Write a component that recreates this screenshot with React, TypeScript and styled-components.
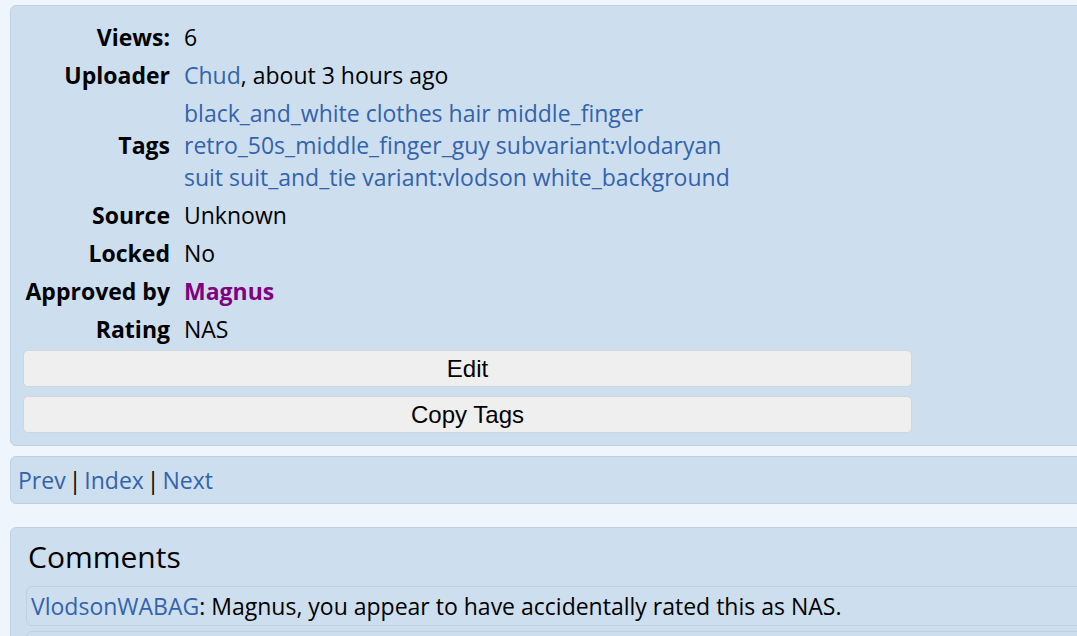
import React from "react";
import styled, { createGlobalStyle } from "styled-components";

const Global = createGlobalStyle`
  html, body {
    margin: 0;
    padding: 0;
    background: #eef5fd;
    overflow: hidden;
  }
  body {
    font-family: "Open Sans", "Noto Sans", sans-serif;
    font-size: 23px;
    color: #000;
  }
`;

const Page = styled.div`
  display: flex;
  flex-direction: column;
  padding: 5px 0 0 10px;
  width: 1100px;
`;

const Panel = styled.section<{ $pad: string; $mt?: number }>`
  background: #cddeee;
  border: 1px solid #bfd0e1;
  border-radius: 6px;
  padding: ${(p) => p.$pad};
  margin-top: ${(p) => p.$mt ?? 0}px;
`;

const InfoGrid = styled.div`
  display: grid;
  grid-template-columns: 147px 1fr;
  column-gap: 14px;
  width: 889px;
`;

const Label = styled.div<{ $center?: boolean }>`
  text-align: right;
  font-weight: 700;
  line-height: 32px;
  padding: 3px 0;
  white-space: nowrap;
  align-self: ${(p) => (p.$center ? "center" : "start")};
`;

const Value = styled.div`
  line-height: 32px;
  padding: 3px 0;
  white-space: nowrap;
  display: flex;
  flex-direction: column;
  justify-content: center;
`;

const Line = styled.div``;

const Link = styled.a<{ $approver?: boolean }>`
  color: ${(p) => (p.$approver ? "#800080" : "#3363ad")};
  font-weight: ${(p) => (p.$approver ? 700 : 400)};
  text-decoration: none;
`;

const Buttons = styled.div`
  grid-column: 1 / 3;
  display: flex;
  flex-direction: column;
  gap: 9px;
  padding-top: 2px;
`;

const Button = styled.button`
  box-sizing: border-box;
  height: 37px;
  width: 100%;
  background: #efefef;
  border: 1px solid #cfd6dd;
  border-radius: 5px;
  font-family: "Liberation Sans", Arial, sans-serif;
  font-size: 24px;
  color: #000;
  padding: 0;
`;

const Nav = styled.div`
  line-height: 32px;
`;

const Sep = styled.span`
  margin: 0 3px;
  color: #000;
`;

const Heading = styled.h2`
  margin: 0 0 9px 0;
  padding-left: 2px;
  font-weight: 400;
  font-size: 30px;
  line-height: 41px;
`;

const Comment = styled.div`
  border: 1px solid #bfd0e1;
  border-radius: 6px;
  padding: 3px 4px;
  line-height: 32px;
  margin-bottom: 5px;
`;

const tagLines = [
  ["black_and_white", "clothes", "hair", "middle_finger"],
  ["retro_50s_middle_finger_guy", "subvariant:vlodaryan"],
  ["suit", "suit_and_tie", "variant:vlodson", "white_background"],
];

export default function App() {
  return (
    <>
      <Global />
      <Page>
        <Panel $pad="12px 12px 12px 12px">
          <InfoGrid>
            <Label>Views:</Label>
            <Value>6</Value>
            <Label>Uploader</Label>
            <Value>
              <Line>
                <Link href="#">Chud</Link>, about 3 hours ago
              </Line>
            </Value>
            <Label $center>Tags</Label>
            <Value>
              {tagLines.map((line, i) => (
                <Line key={i}>
                  {line.map((t, j) => (
                    <React.Fragment key={t}>
                      {j > 0 && " "}
                      <Link href="#">{t}</Link>
                    </React.Fragment>
                  ))}
                </Line>
              ))}
            </Value>
            <Label>Source</Label>
            <Value>Unknown</Value>
            <Label>Locked</Label>
            <Value>No</Value>
            <Label>Approved by</Label>
            <Value>
              <Line>
                <Link href="#" $approver>
                  Magnus
                </Link>
              </Line>
            </Value>
            <Label>Rating</Label>
            <Value>NAS</Value>
            <Buttons>
              <Button>Edit</Button>
              <Button>Copy Tags</Button>
            </Buttons>
          </InfoGrid>
        </Panel>
        <Panel $pad="7px 7px" $mt={10}>
          <Nav>
            <Link href="#">Prev</Link>
            <Sep>|</Sep>
            <Link href="#">Index</Link>
            <Sep>|</Sep>
            <Link href="#">Next</Link>
          </Nav>
        </Panel>
        <Panel $pad="8px 0 4px 15px" $mt={23}>
          <Heading>Comments</Heading>
          <Comment>
            <Link href="#">VlodsonWABAG</Link>: Magnus, you appear to have accidentally rated this as NAS.
          </Comment>
          <Comment>&nbsp;</Comment>
        </Panel>
      </Page>
    </>
  );
}
